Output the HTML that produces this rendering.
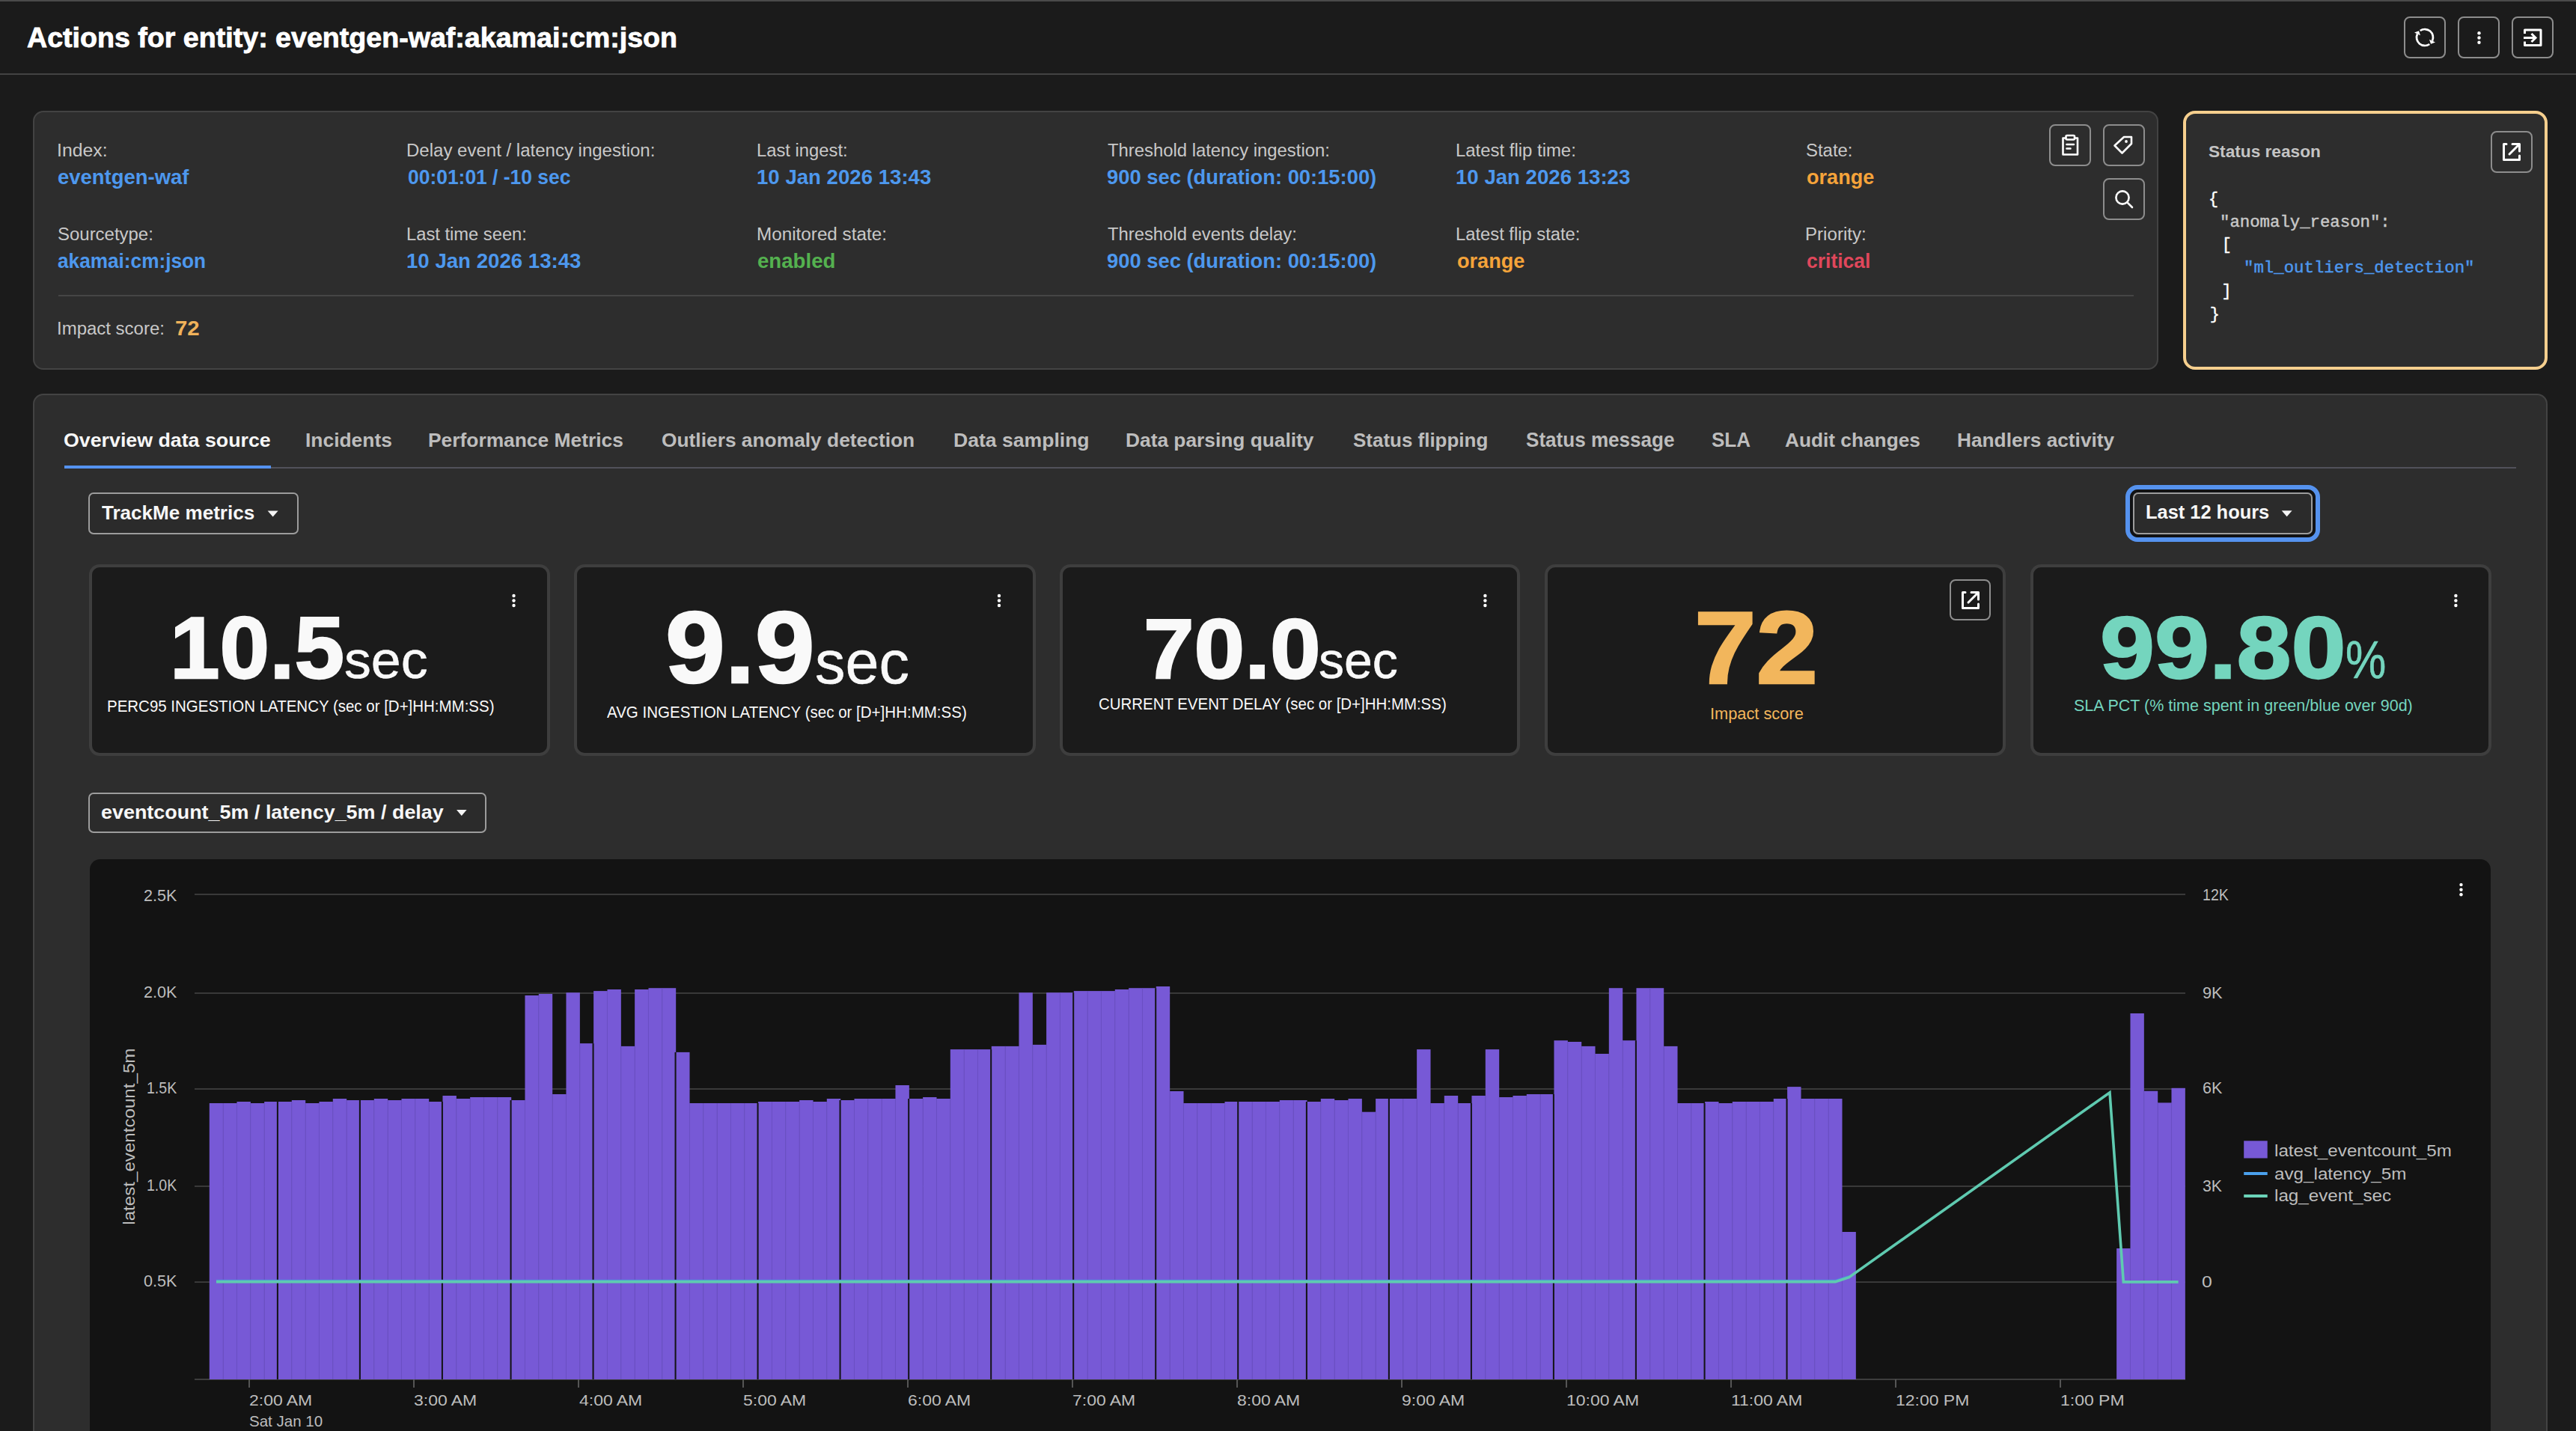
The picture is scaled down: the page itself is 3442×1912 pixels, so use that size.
<!DOCTYPE html><html><head><meta charset="utf-8"><style>
html,body{margin:0;padding:0;width:3442px;height:1912px;overflow:hidden;background:#1b1b1b;}
body{position:relative;font-family:'Liberation Sans', sans-serif;}
.t{position:absolute;white-space:pre;line-height:1;}
.r{position:absolute;box-sizing:border-box;}
svg{position:absolute;left:0;top:0;overflow:visible;}
</style></head><body>
<div class="r" style="left:0px;top:0px;width:3442px;height:2px;background:#4a4a4a"></div>
<div class="r" style="left:0px;top:98px;width:3442px;height:2px;background:#434343"></div>
<div class="t" style="font-size:40px;color:#fff;font-weight:bold;-webkit-text-stroke:0.9px #fff;left:35.50px;top:28.64px;transform-origin:0 33.86px;transform:scale(0.9399,0.9073);">Actions for entity: eventgen-waf:akamai:cm:json</div>
<div class="r" style="left:3212px;top:22px;width:56px;height:56px;border:2px solid #8d8d8d;border-radius:8px;"></div>
<div class="r" style="left:3284px;top:22px;width:56px;height:56px;border:2px solid #8d8d8d;border-radius:8px;"></div>
<div class="r" style="left:3356px;top:22px;width:56px;height:56px;border:2px solid #8d8d8d;border-radius:8px;"></div>
<svg width="3442" height="120">
<path d="M3233.7 41 A11 11 0 0 1 3250 54.6" fill="none" stroke="#fff" stroke-width="2.7"/>
<path d="M3246.3 59 A11 11 0 0 1 3230 45.4" fill="none" stroke="#fff" stroke-width="2.7"/>
<path d="M3248 58.8 L3254 56.4 L3246 52.8 Z" fill="#fff"/>
<path d="M3232 41.2 L3226 43.6 L3234 47.2 Z" fill="#fff"/>
<circle cx="3312.5" cy="44.2" r="2.2" fill="#fff"/><circle cx="3312.5" cy="50.5" r="2.2" fill="#fff"/><circle cx="3312.5" cy="56.8" r="2.2" fill="#fff"/>
<path d="M3373.5 45 V40 H3395 V60.5 H3373.5 V55.5" fill="none" stroke="#fff" stroke-width="3" stroke-linejoin="round"/>
<path d="M3372 50.5 H3388 M3382.5 45 L3388 50.5 L3382.5 56" fill="none" stroke="#fff" stroke-width="3"/>
</svg>
<div class="r" style="left:44px;top:148px;width:2840px;height:346px;background:#2d2d2d;border:2px solid #434343;border-radius:14px;"></div>
<div class="t" style="font-size:23.5px;color:#c8c8c8;left:75.89px;top:189.61px;transform-origin:0 19.89px;transform:scale(1.0550,1.0000);">Index:</div>
<div class="t" style="font-size:27.5px;color:#4d98ee;font-weight:bold;left:77.00px;top:223.22px;transform-origin:0 23.28px;transform:scale(0.9983,1.0000);">eventgen-waf</div>
<div class="t" style="font-size:23.5px;color:#c8c8c8;left:543.46px;top:189.61px;transform-origin:0 19.89px;transform:scale(1.0218,1.0000);">Delay event / latency ingestion:</div>
<div class="t" style="font-size:27.5px;color:#4d98ee;font-weight:bold;left:544.54px;top:223.22px;transform-origin:0 23.28px;transform:scale(0.9609,1.0000);">00:01:01 / -10 sec</div>
<div class="t" style="font-size:23.5px;color:#c8c8c8;left:1010.98px;top:189.61px;transform-origin:0 19.89px;transform:scale(1.0121,1.0000);">Last ingest:</div>
<div class="t" style="font-size:27.5px;color:#4d98ee;font-weight:bold;left:1010.99px;top:223.22px;transform-origin:0 23.28px;transform:scale(1.0039,1.0000);">10 Jan 2026 13:43</div>
<div class="t" style="font-size:23.5px;color:#c8c8c8;left:1480.00px;top:189.61px;transform-origin:0 19.89px;transform:scale(1.0144,1.0000);">Threshold latency ingestion:</div>
<div class="t" style="font-size:27.5px;color:#4d98ee;font-weight:bold;left:1479.01px;top:223.22px;transform-origin:0 23.28px;transform:scale(0.9944,1.0000);">900 sec (duration: 00:15:00)</div>
<div class="t" style="font-size:23.5px;color:#c8c8c8;left:1945.46px;top:189.61px;transform-origin:0 19.89px;transform:scale(1.0175,1.0000);">Latest flip time:</div>
<div class="t" style="font-size:27.5px;color:#4d98ee;font-weight:bold;left:1945.49px;top:223.22px;transform-origin:0 23.28px;transform:scale(1.0039,1.0000);">10 Jan 2026 13:23</div>
<div class="t" style="font-size:23.5px;color:#c8c8c8;left:2413.48px;top:189.61px;transform-origin:0 19.89px;transform:scale(1.0172,1.0000);">State:</div>
<div class="t" style="font-size:27.5px;color:#f5a33a;font-weight:bold;left:2413.52px;top:223.22px;transform-origin:0 23.28px;transform:scale(0.9844,1.0000);">orange</div>
<div class="t" style="font-size:23.5px;color:#c8c8c8;left:76.98px;top:301.61px;transform-origin:0 19.89px;transform:scale(1.0195,1.0000);">Sourcetype:</div>
<div class="t" style="font-size:27.5px;color:#4d98ee;font-weight:bold;left:77.05px;top:334.72px;transform-origin:0 23.28px;transform:scale(0.9527,1.0000);">akamai:cm:json</div>
<div class="t" style="font-size:23.5px;color:#c8c8c8;left:543.48px;top:301.61px;transform-origin:0 19.89px;transform:scale(1.0097,1.0000);">Last time seen:</div>
<div class="t" style="font-size:27.5px;color:#4d98ee;font-weight:bold;left:543.49px;top:334.72px;transform-origin:0 23.28px;transform:scale(1.0043,1.0000);">10 Jan 2026 13:43</div>
<div class="t" style="font-size:23.5px;color:#c8c8c8;left:1010.94px;top:301.61px;transform-origin:0 19.89px;transform:scale(1.0321,1.0000);">Monitored state:</div>
<div class="t" style="font-size:27.5px;color:#54b14f;font-weight:bold;left:1012.00px;top:334.72px;transform-origin:0 23.28px;transform:scale(1.0050,1.0000);">enabled</div>
<div class="t" style="font-size:23.5px;color:#c8c8c8;left:1480.00px;top:301.61px;transform-origin:0 19.89px;transform:scale(1.0133,1.0000);">Threshold events delay:</div>
<div class="t" style="font-size:27.5px;color:#4d98ee;font-weight:bold;left:1479.01px;top:334.72px;transform-origin:0 23.28px;transform:scale(0.9944,1.0000);">900 sec (duration: 00:15:00)</div>
<div class="t" style="font-size:23.5px;color:#c8c8c8;left:1945.48px;top:301.61px;transform-origin:0 19.89px;transform:scale(1.0112,1.0000);">Latest flip state:</div>
<div class="t" style="font-size:27.5px;color:#f5a33a;font-weight:bold;left:1946.52px;top:334.72px;transform-origin:0 23.28px;transform:scale(0.9844,1.0000);">orange</div>
<div class="t" style="font-size:23.5px;color:#c8c8c8;left:2412.45px;top:301.61px;transform-origin:0 19.89px;transform:scale(1.0263,1.0000);">Priority:</div>
<div class="t" style="font-size:27.5px;color:#e0475b;font-weight:bold;left:2413.54px;top:334.72px;transform-origin:0 23.28px;transform:scale(0.9640,1.0000);">critical</div>
<div class="r" style="left:78px;top:394px;width:2773px;height:2px;background:#454545"></div>
<div class="t" style="font-size:23.5px;color:#c8c8c8;left:75.96px;top:428.11px;transform-origin:0 19.89px;transform:scale(1.0204,1.0000);">Impact score:</div>
<div class="t" style="font-size:27.5px;color:#f0b25a;font-weight:bold;left:233.83px;top:424.72px;transform-origin:0 23.28px;transform:scale(1.0690,1.0000);">72</div>
<div class="r" style="left:2738px;top:166px;width:56px;height:56px;border:2px solid #8d8d8d;border-radius:8px;"></div>
<div class="r" style="left:2810px;top:166px;width:56px;height:56px;border:2px solid #8d8d8d;border-radius:8px;"></div>
<div class="r" style="left:2810px;top:238px;width:56px;height:56px;border:2px solid #8d8d8d;border-radius:8px;"></div>
<svg width="3442" height="320">
<g fill="none" stroke="#fff" stroke-width="2.6" stroke-linejoin="round">
<path d="M2760 184.5 H2756.5 V206.5 H2776 V184.5 H2772.5"/>
<rect x="2760.5" y="181" width="11.5" height="5.5" rx="1.5"/>
<path d="M2761.5 193 H2771 M2761.5 198.5 H2766.5" stroke-linecap="round"/>
<path d="M2825.5 194.5 L2835.5 204.5 L2848 192 V183 H2838 Z"/>
<circle cx="2836" cy="264" r="8.6"/>
<path d="M2842.3 270.3 L2849 277" stroke-linecap="round"/>
</g>
<circle cx="2841" cy="189" r="1.9" fill="#fff"/>
</svg>
<div class="r" style="left:2917px;top:148px;width:487px;height:346px;background:#2d2d2d;border:4px solid #f6cf8e;border-radius:16px;"></div>
<div class="t" style="font-size:22.5px;color:#c4c4c4;font-weight:bold;left:2950.99px;top:191.95px;transform-origin:0 19.05px;transform:scale(1.0068,1.0000);">Status reason</div>
<div class="r" style="left:3328px;top:175px;width:56px;height:56px;border:2px solid #8d8d8d;border-radius:8px;"></div>
<svg width="3442" height="320">
<g fill="none" stroke="#fff" stroke-width="3" stroke-linecap="round" stroke-linejoin="round">
<path d="M3349 192.5 H3345.5 V213.5 H3366.5 V208"/>
<path d="M3353 206 L3366 193 M3357 192.5 H3366.5 V202"/>
</g></svg>
<div class="t" style="font-size:21.8px;color:#fff;font-family:'Liberation Mono', monospace;-webkit-text-stroke:0.45px #fff;left:2951.00px;top:255.85px;">{</div>
<div class="t" style="font-size:21.8px;color:#c8c8c8;font-family:'Liberation Mono', monospace;-webkit-text-stroke:0.45px #c8c8c8;left:2966.13px;top:286.61px;transform-origin:0 18.45px;transform:scale(1.0242,1.0000);">"anomaly_reason":</div>
<div class="t" style="font-size:21.8px;color:#fff;font-family:'Liberation Mono', monospace;-webkit-text-stroke:0.45px #fff;left:2968.70px;top:317.37px;">[</div>
<div class="t" style="font-size:21.8px;color:#4d98ee;font-family:'Liberation Mono', monospace;-webkit-text-stroke:0.45px #4d98ee;left:2998.22px;top:348.13px;transform-origin:0 18.45px;transform:scale(1.0254,1.0000);">"ml_outliers_detection"</div>
<div class="t" style="font-size:21.8px;color:#fff;font-family:'Liberation Mono', monospace;-webkit-text-stroke:0.45px #fff;left:2968.60px;top:378.89px;">]</div>
<div class="t" style="font-size:21.8px;color:#fff;font-family:'Liberation Mono', monospace;-webkit-text-stroke:0.45px #fff;left:2952.80px;top:409.65px;">}</div>
<div class="r" style="left:44px;top:526px;width:3360px;height:1420px;background:#2d2d2d;border:2px solid #434343;border-radius:14px;"></div>
<div class="r" style="left:86px;top:624px;width:3276px;height:2px;background:#51515a"></div>
<div class="r" style="left:86px;top:622px;width:276px;height:4px;background:#5592f0"></div>
<div class="t" style="font-size:28px;color:#f7f7f7;font-weight:bold;left:85.24px;top:574.00px;transform-origin:0 23.70px;transform:scale(0.9559,0.9371);">Overview data source</div>
<div class="t" style="font-size:28px;color:#bdbdbd;font-weight:bold;left:408.01px;top:574.00px;transform-origin:0 23.70px;transform:scale(0.9425,0.9371);">Incidents</div>
<div class="t" style="font-size:28px;color:#bdbdbd;font-weight:bold;left:572.12px;top:574.00px;transform-origin:0 23.70px;transform:scale(0.9416,0.9371);">Performance Metrics</div>
<div class="t" style="font-size:28px;color:#bdbdbd;font-weight:bold;left:884.46px;top:574.00px;transform-origin:0 23.70px;transform:scale(0.9409,0.9371);">Outliers anomaly detection</div>
<div class="t" style="font-size:28px;color:#bdbdbd;font-weight:bold;left:1273.70px;top:574.00px;transform-origin:0 23.70px;transform:scale(0.9489,0.9371);">Data sampling</div>
<div class="t" style="font-size:28px;color:#bdbdbd;font-weight:bold;left:1504.12px;top:574.00px;transform-origin:0 23.70px;transform:scale(0.9398,0.9371);">Data parsing quality</div>
<div class="t" style="font-size:28px;color:#bdbdbd;font-weight:bold;left:1808.07px;top:574.00px;transform-origin:0 23.70px;transform:scale(0.9271,0.9371);">Status flipping</div>
<div class="t" style="font-size:28px;color:#bdbdbd;font-weight:bold;left:2038.77px;top:574.00px;transform-origin:0 23.70px;transform:scale(0.9307,0.9847);">Status message</div>
<div class="t" style="font-size:28px;color:#bdbdbd;font-weight:bold;left:2286.87px;top:574.00px;transform-origin:0 23.70px;transform:scale(0.9296,0.9847);">SLA</div>
<div class="t" style="font-size:28px;color:#bdbdbd;font-weight:bold;left:2385.46px;top:574.00px;transform-origin:0 23.70px;transform:scale(0.9377,0.9371);">Audit changes</div>
<div class="t" style="font-size:28px;color:#bdbdbd;font-weight:bold;left:2614.52px;top:574.00px;transform-origin:0 23.70px;transform:scale(0.9378,0.9371);">Handlers activity</div>
<div class="r" style="left:118px;top:658px;width:281px;height:56px;border:2px solid #9c9c9c;border-radius:7px;background:#2b2b2b;"></div>
<div class="t" style="font-size:28px;color:#f7f7f7;font-weight:bold;left:136.00px;top:670.60px;transform-origin:0 23.70px;transform:scale(0.9306,0.9274);">TrackMe metrics</div>
<svg width="3442" height="1912"><path d="M357.6 682.4 H371.6 L364.6 690.4 Z" fill="#f5f5f5"/></svg>
<div class="r" style="left:2840px;top:648px;width:260px;height:76px;border:6px solid #5592ee;border-radius:16px;"></div>
<div class="r" style="left:2846px;top:654px;width:248px;height:64px;border:4px solid #111214;border-radius:11px;"></div>
<div class="r" style="left:2850px;top:658px;width:240px;height:56px;border:2px solid #9c9c9c;border-radius:7px;background:#2b2b2b;"></div>
<div class="t" style="font-size:28px;color:#f7f7f7;font-weight:bold;left:2866.79px;top:670.40px;transform-origin:0 23.70px;transform:scale(0.9073,0.9274);">Last 12 hours</div>
<svg width="3442" height="1912"><path d="M3048.7 682.2 H3062.6 L3055.6499999999996 690.2 Z" fill="#f5f5f5"/></svg>
<div class="r" style="left:118px;top:1058.6px;width:532.4px;height:54.80000000000018px;border:2px solid #9c9c9c;border-radius:7px;background:#2b2b2b;"></div>
<div class="t" style="font-size:28px;color:#f7f7f7;font-weight:bold;left:135.14px;top:1070.60px;transform-origin:0 23.70px;transform:scale(0.9613,0.9274);">eventcount_5m / latency_5m / delay</div>
<svg width="3442" height="1912"><path d="M610 1082 H623.6 L616.8 1090 Z" fill="#f5f5f5"/></svg>
<div class="r" style="left:118.5px;top:754px;width:616.3px;height:255.5px;background:#1b1b1b;border:4px solid #3e3e3e;border-radius:14px;"></div>
<div class="r" style="left:767px;top:754px;width:616.5999999999999px;height:255.5px;background:#1b1b1b;border:4px solid #3e3e3e;border-radius:14px;"></div>
<div class="r" style="left:1416.2px;top:754px;width:614.8px;height:255.5px;background:#1b1b1b;border:4px solid #3e3e3e;border-radius:14px;"></div>
<div class="r" style="left:2063.7px;top:754px;width:616.7000000000003px;height:255.5px;background:#1b1b1b;border:4px solid #3e3e3e;border-radius:14px;"></div>
<div class="r" style="left:2713px;top:754px;width:616.3000000000002px;height:255.5px;background:#1b1b1b;border:4px solid #3e3e3e;border-radius:14px;"></div>
<svg width="3442" height="1912"><circle cx="686.5" cy="796.05" r="2.2" fill="#fff"/><circle cx="686.5" cy="802.5" r="2.2" fill="#fff"/><circle cx="686.5" cy="808.95" r="2.2" fill="#fff"/></svg>
<svg width="3442" height="1912"><circle cx="1335" cy="796.05" r="2.2" fill="#fff"/><circle cx="1335" cy="802.5" r="2.2" fill="#fff"/><circle cx="1335" cy="808.95" r="2.2" fill="#fff"/></svg>
<svg width="3442" height="1912"><circle cx="1984.4" cy="796.05" r="2.2" fill="#fff"/><circle cx="1984.4" cy="802.5" r="2.2" fill="#fff"/><circle cx="1984.4" cy="808.95" r="2.2" fill="#fff"/></svg>
<svg width="3442" height="1912"><circle cx="3281.4" cy="796.05" r="2.2" fill="#fff"/><circle cx="3281.4" cy="802.5" r="2.2" fill="#fff"/><circle cx="3281.4" cy="808.95" r="2.2" fill="#fff"/></svg>
<div class="t" style="font-size:122px;color:#f9f9f9;font-weight:bold;-webkit-text-stroke:2.4px #f9f9f9;left:227.11px;top:803.23px;transform-origin:0 103.27px;transform:scale(0.9817,0.9614);">10.5</div>
<div class="t" style="font-size:72.6px;color:#f9f9f9;-webkit-text-stroke:0.6px #f9f9f9;left:460.43px;top:845.04px;transform-origin:0 61.46px;transform:scale(0.9873,0.9580);">sec</div>
<div class="t" style="font-size:21.8px;color:#f9f9f9;left:143.32px;top:932.75px;transform-origin:0 18.45px;transform:scale(0.9394,1.0000);">PERC95 INGESTION LATENCY (sec or [D+]HH:MM:SS)</div>
<div class="t" style="font-size:135px;color:#f9f9f9;font-weight:bold;-webkit-text-stroke:2.4px #f9f9f9;left:888.51px;top:798.42px;transform-origin:0 114.28px;transform:scale(1.0635,0.9982);">9.9</div>
<div class="t" style="font-size:85px;color:#f9f9f9;-webkit-text-stroke:0.6px #f9f9f9;left:1088.50px;top:840.75px;transform-origin:0 71.95px;transform:scale(0.9516,0.9553);">sec</div>
<div class="t" style="font-size:21.8px;color:#f9f9f9;left:811.00px;top:940.95px;transform-origin:0 18.45px;transform:scale(0.9418,1.0000);">AVG INGESTION LATENCY (sec or [D+]HH:MM:SS)</div>
<div class="t" style="font-size:117px;color:#f9f9f9;font-weight:bold;-webkit-text-stroke:2.4px #f9f9f9;left:1527.54px;top:807.46px;transform-origin:0 99.04px;transform:scale(1.0391,0.9718);">70.0</div>
<div class="t" style="font-size:72.6px;color:#f9f9f9;-webkit-text-stroke:0.6px #f9f9f9;left:1762.13px;top:845.04px;transform-origin:0 61.46px;transform:scale(0.9373,0.9555);">sec</div>
<div class="t" style="font-size:21.8px;color:#f9f9f9;left:1467.96px;top:930.35px;transform-origin:0 18.45px;transform:scale(0.9377,1.0000);">CURRENT EVENT DELAY (sec or [D+]HH:MM:SS)</div>
<div class="t" style="font-size:143px;color:#f2b65c;font-weight:bold;-webkit-text-stroke:2.8px #f2b65c;left:2263.51px;top:792.45px;transform-origin:0 121.05px;transform:scale(1.0387,0.9652);">72</div>
<div class="t" style="font-size:22.6px;color:#f2b65c;left:2285.37px;top:943.27px;transform-origin:0 19.13px;transform:scale(0.9646,1.0000);">Impact score</div>
<div class="r" style="left:2605.3px;top:774.3px;width:55.2px;height:55.2px;border:2px solid #8d8d8d;border-radius:8px;"></div>
<svg width="3442" height="1912"><g fill="none" stroke="#fff" stroke-width="3" stroke-linecap="round" stroke-linejoin="round">
<path d="M2626 791.5 H2622.5 V812.5 H2643.5 V807"/>
<path d="M2630 805 L2643 792 M2634 791.5 H2643.5 V801"/>
</g></svg>
<div class="t" style="font-size:122px;color:#74d5be;font-weight:bold;-webkit-text-stroke:2.4px #74d5be;left:2806.07px;top:803.23px;transform-origin:0 103.27px;transform:scale(1.0759,0.9625);">99.80</div>
<div class="t" style="font-size:70px;color:#74d5be;-webkit-text-stroke:0.6px #74d5be;left:3133.86px;top:847.25px;transform-origin:0 59.26px;transform:scale(0.8724,0.9989);">%</div>
<div class="t" style="font-size:21.8px;color:#74d5be;left:2771.01px;top:932.25px;transform-origin:0 18.45px;transform:scale(0.9869,1.0000);">SLA PCT (% time spent in green/blue over 90d)</div>
<div class="r" style="left:120px;top:1147.8px;width:3208px;height:800px;background:#131313;border-radius:14px;"></div>
<svg width="3442" height="1912"><rect x="260" y="1194" width="2660" height="2" fill="#393939"/><rect x="260" y="1326" width="2660" height="2" fill="#393939"/><rect x="260" y="1454" width="2660" height="2" fill="#393939"/><rect x="260" y="1584" width="2660" height="2" fill="#393939"/><rect x="260" y="1712" width="2660" height="2" fill="#393939"/><rect x="260" y="1842" width="2660" height="2" fill="#3d3d3d"/><rect x="332" y="1843" width="2" height="11" fill="#555"/><rect x="552" y="1843" width="2" height="11" fill="#555"/><rect x="772" y="1843" width="2" height="11" fill="#555"/><rect x="992" y="1843" width="2" height="11" fill="#555"/><rect x="1212" y="1843" width="2" height="11" fill="#555"/><rect x="1432" y="1843" width="2" height="11" fill="#555"/><rect x="1652" y="1843" width="2" height="11" fill="#555"/><rect x="1872" y="1843" width="2" height="11" fill="#555"/><rect x="2092" y="1843" width="2" height="11" fill="#555"/><rect x="2312" y="1843" width="2" height="11" fill="#555"/><rect x="2532" y="1843" width="2" height="11" fill="#555"/><rect x="2752" y="1843" width="2" height="11" fill="#555"/><rect x="279.80" y="1474.00" width="18.38" height="369.00" fill="#7759d6"/><rect x="298.13" y="1474.00" width="18.38" height="369.00" fill="#7759d6"/><rect x="316.47" y="1472.00" width="18.38" height="371.00" fill="#7759d6"/><rect x="334.80" y="1474.00" width="18.38" height="369.00" fill="#7759d6"/><rect x="353.13" y="1472.00" width="18.38" height="371.00" fill="#7759d6"/><rect x="371.47" y="1472.00" width="18.38" height="371.00" fill="#7759d6"/><rect x="389.80" y="1470.00" width="18.38" height="373.00" fill="#7759d6"/><rect x="408.13" y="1474.00" width="18.38" height="369.00" fill="#7759d6"/><rect x="426.47" y="1472.00" width="18.38" height="371.00" fill="#7759d6"/><rect x="444.80" y="1468.00" width="18.38" height="375.00" fill="#7759d6"/><rect x="463.13" y="1470.00" width="18.38" height="373.00" fill="#7759d6"/><rect x="481.47" y="1470.00" width="18.38" height="373.00" fill="#7759d6"/><rect x="499.80" y="1468.00" width="18.38" height="375.00" fill="#7759d6"/><rect x="518.13" y="1470.00" width="18.38" height="373.00" fill="#7759d6"/><rect x="536.47" y="1468.00" width="18.38" height="375.00" fill="#7759d6"/><rect x="554.80" y="1468.00" width="18.38" height="375.00" fill="#7759d6"/><rect x="573.13" y="1472.00" width="18.38" height="371.00" fill="#7759d6"/><rect x="591.47" y="1464.00" width="18.38" height="379.00" fill="#7759d6"/><rect x="609.80" y="1468.00" width="18.38" height="375.00" fill="#7759d6"/><rect x="628.13" y="1466.00" width="18.38" height="377.00" fill="#7759d6"/><rect x="646.47" y="1466.00" width="18.38" height="377.00" fill="#7759d6"/><rect x="664.80" y="1466.00" width="18.38" height="377.00" fill="#7759d6"/><rect x="683.13" y="1470.00" width="18.38" height="373.00" fill="#7759d6"/><rect x="701.47" y="1330.00" width="18.38" height="513.00" fill="#7759d6"/><rect x="719.80" y="1328.00" width="18.38" height="515.00" fill="#7759d6"/><rect x="738.13" y="1462.00" width="18.38" height="381.00" fill="#7759d6"/><rect x="756.47" y="1326.25" width="18.38" height="516.75" fill="#7759d6"/><rect x="774.80" y="1394.10" width="18.38" height="448.90" fill="#7759d6"/><rect x="793.13" y="1324.10" width="18.38" height="518.90" fill="#7759d6"/><rect x="811.47" y="1322.00" width="18.38" height="521.00" fill="#7759d6"/><rect x="829.80" y="1397.90" width="18.38" height="445.10" fill="#7759d6"/><rect x="848.13" y="1322.00" width="18.38" height="521.00" fill="#7759d6"/><rect x="866.47" y="1320.20" width="18.38" height="522.80" fill="#7759d6"/><rect x="884.80" y="1320.20" width="18.38" height="522.80" fill="#7759d6"/><rect x="903.13" y="1405.90" width="18.38" height="437.10" fill="#7759d6"/><rect x="921.47" y="1474.00" width="18.38" height="369.00" fill="#7759d6"/><rect x="939.80" y="1474.00" width="18.38" height="369.00" fill="#7759d6"/><rect x="958.13" y="1474.00" width="18.38" height="369.00" fill="#7759d6"/><rect x="976.47" y="1474.00" width="18.38" height="369.00" fill="#7759d6"/><rect x="994.80" y="1474.00" width="18.38" height="369.00" fill="#7759d6"/><rect x="1013.13" y="1472.00" width="18.38" height="371.00" fill="#7759d6"/><rect x="1031.47" y="1472.00" width="18.38" height="371.00" fill="#7759d6"/><rect x="1049.80" y="1472.00" width="18.38" height="371.00" fill="#7759d6"/><rect x="1068.13" y="1470.00" width="18.38" height="373.00" fill="#7759d6"/><rect x="1086.47" y="1472.00" width="18.38" height="371.00" fill="#7759d6"/><rect x="1104.80" y="1468.00" width="18.38" height="375.00" fill="#7759d6"/><rect x="1123.13" y="1470.00" width="18.38" height="373.00" fill="#7759d6"/><rect x="1141.47" y="1468.00" width="18.38" height="375.00" fill="#7759d6"/><rect x="1159.80" y="1468.00" width="18.38" height="375.00" fill="#7759d6"/><rect x="1178.13" y="1468.00" width="18.38" height="375.00" fill="#7759d6"/><rect x="1196.47" y="1450.00" width="18.38" height="393.00" fill="#7759d6"/><rect x="1214.80" y="1468.00" width="18.38" height="375.00" fill="#7759d6"/><rect x="1233.13" y="1466.00" width="18.38" height="377.00" fill="#7759d6"/><rect x="1251.47" y="1468.00" width="18.38" height="375.00" fill="#7759d6"/><rect x="1269.80" y="1402.10" width="18.38" height="440.90" fill="#7759d6"/><rect x="1288.13" y="1402.10" width="18.38" height="440.90" fill="#7759d6"/><rect x="1306.47" y="1402.10" width="18.38" height="440.90" fill="#7759d6"/><rect x="1324.80" y="1397.90" width="18.38" height="445.10" fill="#7759d6"/><rect x="1343.13" y="1397.90" width="18.38" height="445.10" fill="#7759d6"/><rect x="1361.47" y="1326.25" width="18.38" height="516.75" fill="#7759d6"/><rect x="1379.80" y="1395.90" width="18.38" height="447.10" fill="#7759d6"/><rect x="1398.13" y="1326.25" width="18.38" height="516.75" fill="#7759d6"/><rect x="1416.47" y="1326.25" width="18.38" height="516.75" fill="#7759d6"/><rect x="1434.80" y="1324.10" width="18.38" height="518.90" fill="#7759d6"/><rect x="1453.13" y="1324.10" width="18.38" height="518.90" fill="#7759d6"/><rect x="1471.47" y="1324.10" width="18.38" height="518.90" fill="#7759d6"/><rect x="1489.80" y="1322.00" width="18.38" height="521.00" fill="#7759d6"/><rect x="1508.13" y="1320.20" width="18.38" height="522.80" fill="#7759d6"/><rect x="1526.47" y="1320.20" width="18.38" height="522.80" fill="#7759d6"/><rect x="1544.80" y="1318.00" width="18.38" height="525.00" fill="#7759d6"/><rect x="1563.13" y="1458.00" width="18.38" height="385.00" fill="#7759d6"/><rect x="1581.47" y="1474.00" width="18.38" height="369.00" fill="#7759d6"/><rect x="1599.80" y="1474.00" width="18.38" height="369.00" fill="#7759d6"/><rect x="1618.13" y="1474.00" width="18.38" height="369.00" fill="#7759d6"/><rect x="1636.47" y="1472.00" width="18.38" height="371.00" fill="#7759d6"/><rect x="1654.80" y="1472.00" width="18.38" height="371.00" fill="#7759d6"/><rect x="1673.13" y="1472.00" width="18.38" height="371.00" fill="#7759d6"/><rect x="1691.47" y="1472.00" width="18.38" height="371.00" fill="#7759d6"/><rect x="1709.80" y="1470.00" width="18.38" height="373.00" fill="#7759d6"/><rect x="1728.13" y="1470.00" width="18.38" height="373.00" fill="#7759d6"/><rect x="1746.47" y="1472.00" width="18.38" height="371.00" fill="#7759d6"/><rect x="1764.80" y="1468.00" width="18.38" height="375.00" fill="#7759d6"/><rect x="1783.13" y="1470.00" width="18.38" height="373.00" fill="#7759d6"/><rect x="1801.47" y="1468.00" width="18.38" height="375.00" fill="#7759d6"/><rect x="1819.80" y="1485.70" width="18.38" height="357.30" fill="#7759d6"/><rect x="1838.13" y="1468.00" width="18.38" height="375.00" fill="#7759d6"/><rect x="1856.47" y="1468.00" width="18.38" height="375.00" fill="#7759d6"/><rect x="1874.80" y="1468.00" width="18.38" height="375.00" fill="#7759d6"/><rect x="1893.13" y="1402.10" width="18.38" height="440.90" fill="#7759d6"/><rect x="1911.47" y="1474.00" width="18.38" height="369.00" fill="#7759d6"/><rect x="1929.80" y="1464.00" width="18.38" height="379.00" fill="#7759d6"/><rect x="1948.13" y="1474.00" width="18.38" height="369.00" fill="#7759d6"/><rect x="1966.47" y="1464.00" width="18.38" height="379.00" fill="#7759d6"/><rect x="1984.80" y="1402.10" width="18.38" height="440.90" fill="#7759d6"/><rect x="2003.13" y="1466.00" width="18.38" height="377.00" fill="#7759d6"/><rect x="2021.47" y="1464.00" width="18.38" height="379.00" fill="#7759d6"/><rect x="2039.80" y="1462.00" width="18.38" height="381.00" fill="#7759d6"/><rect x="2058.13" y="1462.00" width="18.38" height="381.00" fill="#7759d6"/><rect x="2076.47" y="1390.20" width="18.38" height="452.80" fill="#7759d6"/><rect x="2094.80" y="1392.00" width="18.38" height="451.00" fill="#7759d6"/><rect x="2113.13" y="1397.90" width="18.38" height="445.10" fill="#7759d6"/><rect x="2131.47" y="1408.00" width="18.38" height="435.00" fill="#7759d6"/><rect x="2149.80" y="1320.20" width="18.38" height="522.80" fill="#7759d6"/><rect x="2168.13" y="1390.20" width="18.38" height="452.80" fill="#7759d6"/><rect x="2186.47" y="1320.20" width="18.38" height="522.80" fill="#7759d6"/><rect x="2204.80" y="1320.20" width="18.38" height="522.80" fill="#7759d6"/><rect x="2223.13" y="1397.90" width="18.38" height="445.10" fill="#7759d6"/><rect x="2241.47" y="1474.00" width="18.38" height="369.00" fill="#7759d6"/><rect x="2259.80" y="1474.00" width="18.38" height="369.00" fill="#7759d6"/><rect x="2278.13" y="1472.00" width="18.38" height="371.00" fill="#7759d6"/><rect x="2296.47" y="1474.00" width="18.38" height="369.00" fill="#7759d6"/><rect x="2314.80" y="1472.00" width="18.38" height="371.00" fill="#7759d6"/><rect x="2333.13" y="1472.00" width="18.38" height="371.00" fill="#7759d6"/><rect x="2351.47" y="1472.00" width="18.38" height="371.00" fill="#7759d6"/><rect x="2369.80" y="1468.00" width="18.38" height="375.00" fill="#7759d6"/><rect x="2388.13" y="1452.10" width="18.38" height="390.90" fill="#7759d6"/><rect x="2406.47" y="1468.00" width="18.38" height="375.00" fill="#7759d6"/><rect x="2424.80" y="1468.00" width="18.38" height="375.00" fill="#7759d6"/><rect x="2443.13" y="1468.00" width="18.38" height="375.00" fill="#7759d6"/><rect x="2461.47" y="1646.00" width="18.38" height="197.00" fill="#7759d6"/><rect x="2828.13" y="1668.00" width="18.38" height="175.00" fill="#7759d6"/><rect x="2846.47" y="1354.00" width="18.38" height="489.00" fill="#7759d6"/><rect x="2864.80" y="1457.70" width="18.38" height="385.30" fill="#7759d6"/><rect x="2883.13" y="1473.40" width="18.38" height="369.60" fill="#7759d6"/><rect x="2901.47" y="1453.80" width="18.38" height="389.20" fill="#7759d6"/><rect x="297.63" y="1474.00" width="1" height="369.00" fill="#6b50c4"/><rect x="315.97" y="1474.00" width="1" height="369.00" fill="#6b50c4"/><rect x="334.30" y="1474.00" width="1" height="369.00" fill="#6b50c4"/><rect x="352.63" y="1474.00" width="1" height="369.00" fill="#6b50c4"/><rect x="369.87" y="1472.00" width="2" height="371.00" fill="#141416"/><rect x="389.30" y="1472.00" width="1" height="371.00" fill="#6b50c4"/><rect x="407.63" y="1474.00" width="1" height="369.00" fill="#6b50c4"/><rect x="425.97" y="1474.00" width="1" height="369.00" fill="#6b50c4"/><rect x="444.30" y="1472.00" width="1" height="371.00" fill="#6b50c4"/><rect x="462.63" y="1470.00" width="1" height="373.00" fill="#6b50c4"/><rect x="479.87" y="1470.00" width="2" height="373.00" fill="#141416"/><rect x="499.30" y="1470.00" width="1" height="373.00" fill="#6b50c4"/><rect x="517.63" y="1470.00" width="1" height="373.00" fill="#6b50c4"/><rect x="535.97" y="1470.00" width="1" height="373.00" fill="#6b50c4"/><rect x="554.30" y="1468.00" width="1" height="375.00" fill="#6b50c4"/><rect x="572.63" y="1472.00" width="1" height="371.00" fill="#6b50c4"/><rect x="589.87" y="1472.00" width="2" height="371.00" fill="#141416"/><rect x="609.30" y="1468.00" width="1" height="375.00" fill="#6b50c4"/><rect x="627.63" y="1468.00" width="1" height="375.00" fill="#6b50c4"/><rect x="645.97" y="1466.00" width="1" height="377.00" fill="#6b50c4"/><rect x="664.30" y="1466.00" width="1" height="377.00" fill="#6b50c4"/><rect x="681.53" y="1470.00" width="2" height="373.00" fill="#141416"/><rect x="700.97" y="1470.00" width="1" height="373.00" fill="#6b50c4"/><rect x="719.30" y="1330.00" width="1" height="513.00" fill="#6b50c4"/><rect x="737.63" y="1462.00" width="1" height="381.00" fill="#6b50c4"/><rect x="755.97" y="1462.00" width="1" height="381.00" fill="#6b50c4"/><rect x="774.30" y="1394.10" width="1" height="448.90" fill="#6b50c4"/><rect x="791.53" y="1394.10" width="2" height="448.90" fill="#141416"/><rect x="810.97" y="1324.10" width="1" height="518.90" fill="#6b50c4"/><rect x="829.30" y="1397.90" width="1" height="445.10" fill="#6b50c4"/><rect x="847.63" y="1397.90" width="1" height="445.10" fill="#6b50c4"/><rect x="865.97" y="1322.00" width="1" height="521.00" fill="#6b50c4"/><rect x="884.30" y="1320.20" width="1" height="522.80" fill="#6b50c4"/><rect x="901.53" y="1405.90" width="2" height="437.10" fill="#141416"/><rect x="920.97" y="1474.00" width="1" height="369.00" fill="#6b50c4"/><rect x="939.30" y="1474.00" width="1" height="369.00" fill="#6b50c4"/><rect x="957.63" y="1474.00" width="1" height="369.00" fill="#6b50c4"/><rect x="975.97" y="1474.00" width="1" height="369.00" fill="#6b50c4"/><rect x="994.30" y="1474.00" width="1" height="369.00" fill="#6b50c4"/><rect x="1011.53" y="1474.00" width="2" height="369.00" fill="#141416"/><rect x="1030.97" y="1472.00" width="1" height="371.00" fill="#6b50c4"/><rect x="1049.30" y="1472.00" width="1" height="371.00" fill="#6b50c4"/><rect x="1067.63" y="1472.00" width="1" height="371.00" fill="#6b50c4"/><rect x="1085.97" y="1472.00" width="1" height="371.00" fill="#6b50c4"/><rect x="1104.30" y="1472.00" width="1" height="371.00" fill="#6b50c4"/><rect x="1121.53" y="1470.00" width="2" height="373.00" fill="#141416"/><rect x="1140.97" y="1470.00" width="1" height="373.00" fill="#6b50c4"/><rect x="1159.30" y="1468.00" width="1" height="375.00" fill="#6b50c4"/><rect x="1177.63" y="1468.00" width="1" height="375.00" fill="#6b50c4"/><rect x="1195.97" y="1468.00" width="1" height="375.00" fill="#6b50c4"/><rect x="1213.20" y="1468.00" width="2" height="375.00" fill="#141416"/><rect x="1232.63" y="1468.00" width="1" height="375.00" fill="#6b50c4"/><rect x="1250.97" y="1468.00" width="1" height="375.00" fill="#6b50c4"/><rect x="1269.30" y="1468.00" width="1" height="375.00" fill="#6b50c4"/><rect x="1287.63" y="1402.10" width="1" height="440.90" fill="#6b50c4"/><rect x="1305.97" y="1402.10" width="1" height="440.90" fill="#6b50c4"/><rect x="1323.20" y="1402.10" width="2" height="440.90" fill="#141416"/><rect x="1342.63" y="1397.90" width="1" height="445.10" fill="#6b50c4"/><rect x="1360.97" y="1397.90" width="1" height="445.10" fill="#6b50c4"/><rect x="1379.30" y="1395.90" width="1" height="447.10" fill="#6b50c4"/><rect x="1397.63" y="1395.90" width="1" height="447.10" fill="#6b50c4"/><rect x="1415.97" y="1326.25" width="1" height="516.75" fill="#6b50c4"/><rect x="1433.20" y="1326.25" width="2" height="516.75" fill="#141416"/><rect x="1452.63" y="1324.10" width="1" height="518.90" fill="#6b50c4"/><rect x="1470.97" y="1324.10" width="1" height="518.90" fill="#6b50c4"/><rect x="1489.30" y="1324.10" width="1" height="518.90" fill="#6b50c4"/><rect x="1507.63" y="1322.00" width="1" height="521.00" fill="#6b50c4"/><rect x="1525.97" y="1320.20" width="1" height="522.80" fill="#6b50c4"/><rect x="1543.20" y="1320.20" width="2" height="522.80" fill="#141416"/><rect x="1562.63" y="1458.00" width="1" height="385.00" fill="#6b50c4"/><rect x="1580.97" y="1474.00" width="1" height="369.00" fill="#6b50c4"/><rect x="1599.30" y="1474.00" width="1" height="369.00" fill="#6b50c4"/><rect x="1617.63" y="1474.00" width="1" height="369.00" fill="#6b50c4"/><rect x="1635.97" y="1474.00" width="1" height="369.00" fill="#6b50c4"/><rect x="1653.20" y="1472.00" width="2" height="371.00" fill="#141416"/><rect x="1672.63" y="1472.00" width="1" height="371.00" fill="#6b50c4"/><rect x="1690.97" y="1472.00" width="1" height="371.00" fill="#6b50c4"/><rect x="1709.30" y="1472.00" width="1" height="371.00" fill="#6b50c4"/><rect x="1727.63" y="1470.00" width="1" height="373.00" fill="#6b50c4"/><rect x="1744.87" y="1472.00" width="2" height="371.00" fill="#141416"/><rect x="1764.30" y="1472.00" width="1" height="371.00" fill="#6b50c4"/><rect x="1782.63" y="1470.00" width="1" height="373.00" fill="#6b50c4"/><rect x="1800.97" y="1470.00" width="1" height="373.00" fill="#6b50c4"/><rect x="1819.30" y="1485.70" width="1" height="357.30" fill="#6b50c4"/><rect x="1837.63" y="1485.70" width="1" height="357.30" fill="#6b50c4"/><rect x="1854.87" y="1468.00" width="2" height="375.00" fill="#141416"/><rect x="1874.30" y="1468.00" width="1" height="375.00" fill="#6b50c4"/><rect x="1892.63" y="1468.00" width="1" height="375.00" fill="#6b50c4"/><rect x="1910.97" y="1474.00" width="1" height="369.00" fill="#6b50c4"/><rect x="1929.30" y="1474.00" width="1" height="369.00" fill="#6b50c4"/><rect x="1947.63" y="1474.00" width="1" height="369.00" fill="#6b50c4"/><rect x="1964.87" y="1474.00" width="2" height="369.00" fill="#141416"/><rect x="1984.30" y="1464.00" width="1" height="379.00" fill="#6b50c4"/><rect x="2002.63" y="1466.00" width="1" height="377.00" fill="#6b50c4"/><rect x="2020.97" y="1466.00" width="1" height="377.00" fill="#6b50c4"/><rect x="2039.30" y="1464.00" width="1" height="379.00" fill="#6b50c4"/><rect x="2057.63" y="1462.00" width="1" height="381.00" fill="#6b50c4"/><rect x="2074.87" y="1462.00" width="2" height="381.00" fill="#141416"/><rect x="2094.30" y="1392.00" width="1" height="451.00" fill="#6b50c4"/><rect x="2112.63" y="1397.90" width="1" height="445.10" fill="#6b50c4"/><rect x="2130.97" y="1408.00" width="1" height="435.00" fill="#6b50c4"/><rect x="2149.30" y="1408.00" width="1" height="435.00" fill="#6b50c4"/><rect x="2167.63" y="1390.20" width="1" height="452.80" fill="#6b50c4"/><rect x="2184.87" y="1390.20" width="2" height="452.80" fill="#141416"/><rect x="2204.30" y="1320.20" width="1" height="522.80" fill="#6b50c4"/><rect x="2222.63" y="1397.90" width="1" height="445.10" fill="#6b50c4"/><rect x="2240.97" y="1474.00" width="1" height="369.00" fill="#6b50c4"/><rect x="2259.30" y="1474.00" width="1" height="369.00" fill="#6b50c4"/><rect x="2276.53" y="1474.00" width="2" height="369.00" fill="#141416"/><rect x="2295.97" y="1474.00" width="1" height="369.00" fill="#6b50c4"/><rect x="2314.30" y="1474.00" width="1" height="369.00" fill="#6b50c4"/><rect x="2332.63" y="1472.00" width="1" height="371.00" fill="#6b50c4"/><rect x="2350.97" y="1472.00" width="1" height="371.00" fill="#6b50c4"/><rect x="2369.30" y="1472.00" width="1" height="371.00" fill="#6b50c4"/><rect x="2386.53" y="1468.00" width="2" height="375.00" fill="#141416"/><rect x="2405.97" y="1468.00" width="1" height="375.00" fill="#6b50c4"/><rect x="2424.30" y="1468.00" width="1" height="375.00" fill="#6b50c4"/><rect x="2442.63" y="1468.00" width="1" height="375.00" fill="#6b50c4"/><rect x="2460.97" y="1646.00" width="1" height="197.00" fill="#6b50c4"/><rect x="2845.97" y="1668.00" width="1" height="175.00" fill="#6b50c4"/><rect x="2864.30" y="1457.70" width="1" height="385.30" fill="#6b50c4"/><rect x="2882.63" y="1473.40" width="1" height="369.60" fill="#6b50c4"/><rect x="2900.97" y="1473.40" width="1" height="369.60" fill="#6b50c4"/><polyline points="289.0,1712.6 2452.3,1712.6 2470.6,1706.7" fill="none" stroke="#4f8fe0" stroke-width="3.5" transform="translate(0,-1)"/><polyline points="289.0,1712.6 2452.3,1712.6 2470.6,1706.7 2819.0,1459.7 2837.3,1712.9 2910.6,1712.9" fill="none" stroke="#5fcab0" stroke-width="3.6" stroke-linejoin="miter"/><rect x="2998.2" y="1524.3" width="31.5" height="23.2" fill="#7759d6"/><rect x="2998.2" y="1566" width="31.5" height="4" fill="#4aa0ec"/><rect x="2998.2" y="1596" width="31.5" height="4" fill="#6bd3b9"/></svg>
<svg width="3442" height="1912"><circle cx="3288.5" cy="1182.1000000000001" r="2.2" fill="#fff"/><circle cx="3288.5" cy="1188.7" r="2.2" fill="#fff"/><circle cx="3288.5" cy="1195.3" r="2.2" fill="#fff"/></svg>
<div class="t" style="font-size:22px;color:#bdbdbd;left:191.52px;top:1185.58px;transform-origin:0 18.62px;transform:scale(0.9795,1.0000);">2.5K</div>
<div class="t" style="font-size:22px;color:#bdbdbd;left:191.52px;top:1315.38px;transform-origin:0 18.62px;transform:scale(0.9795,1.0000);">2.0K</div>
<div class="t" style="font-size:22px;color:#bdbdbd;left:195.61px;top:1443.08px;transform-origin:0 18.62px;transform:scale(0.8886,1.0000);">1.5K</div>
<div class="t" style="font-size:22px;color:#bdbdbd;left:195.61px;top:1572.88px;transform-origin:0 18.62px;transform:scale(0.8886,1.0000);">1.0K</div>
<div class="t" style="font-size:22px;color:#bdbdbd;left:191.52px;top:1701.38px;transform-origin:0 18.62px;transform:scale(0.9795,1.0000);">0.5K</div>
<div class="t" style="font-size:22px;color:#bdbdbd;left:2942.61px;top:1185.38px;transform-origin:0 18.62px;transform:scale(0.8895,1.0000);">12K</div>
<div class="t" style="font-size:22px;color:#bdbdbd;left:2942.51px;top:1315.98px;transform-origin:0 18.62px;transform:scale(0.9885,1.0000);">9K</div>
<div class="t" style="font-size:22px;color:#bdbdbd;left:2942.52px;top:1443.38px;transform-origin:0 18.62px;transform:scale(0.9769,1.0000);">6K</div>
<div class="t" style="font-size:22px;color:#bdbdbd;left:2942.53px;top:1573.88px;transform-origin:0 18.62px;transform:scale(0.9654,1.0000);">3K</div>
<div class="t" style="font-size:22px;color:#bdbdbd;left:2942.37px;top:1701.88px;transform-origin:0 18.62px;transform:scale(1.1273,1.0000);">0</div>
<div class="t" style="font-size:21px;color:#bdbdbd;left:332.51px;top:1860.22px;transform-origin:0 17.78px;transform:scale(1.0933,1.0000);">2:00 AM</div>
<div class="t" style="font-size:21px;color:#bdbdbd;left:552.51px;top:1860.22px;transform-origin:0 17.78px;transform:scale(1.0933,1.0000);">3:00 AM</div>
<div class="t" style="font-size:21px;color:#bdbdbd;left:773.60px;top:1860.22px;transform-origin:0 17.78px;transform:scale(1.0933,1.0000);">4:00 AM</div>
<div class="t" style="font-size:21px;color:#bdbdbd;left:992.51px;top:1860.22px;transform-origin:0 17.78px;transform:scale(1.0933,1.0000);">5:00 AM</div>
<div class="t" style="font-size:21px;color:#bdbdbd;left:1212.51px;top:1860.22px;transform-origin:0 17.78px;transform:scale(1.0933,1.0000);">6:00 AM</div>
<div class="t" style="font-size:21px;color:#bdbdbd;left:1432.51px;top:1860.22px;transform-origin:0 17.78px;transform:scale(1.0933,1.0000);">7:00 AM</div>
<div class="t" style="font-size:21px;color:#bdbdbd;left:1652.51px;top:1860.22px;transform-origin:0 17.78px;transform:scale(1.0933,1.0000);">8:00 AM</div>
<div class="t" style="font-size:21px;color:#bdbdbd;left:1872.51px;top:1860.22px;transform-origin:0 17.78px;transform:scale(1.0933,1.0000);">9:00 AM</div>
<div class="t" style="font-size:21px;color:#bdbdbd;left:2092.51px;top:1860.22px;transform-origin:0 17.78px;transform:scale(1.0933,1.0000);">10:00 AM</div>
<div class="t" style="font-size:21px;color:#bdbdbd;left:2312.51px;top:1860.22px;transform-origin:0 17.78px;transform:scale(1.0933,1.0000);">11:00 AM</div>
<div class="t" style="font-size:21px;color:#bdbdbd;left:2532.51px;top:1860.22px;transform-origin:0 17.78px;transform:scale(1.0933,1.0000);">12:00 PM</div>
<div class="t" style="font-size:21px;color:#bdbdbd;left:2752.51px;top:1860.22px;transform-origin:0 17.78px;transform:scale(1.0933,1.0000);">1:00 PM</div>
<div class="t" style="font-size:21px;color:#bdbdbd;left:332.62px;top:1888.22px;transform-origin:0 17.78px;transform:scale(0.9768,1.0000);">Sat Jan 10</div>
<div class="t" style="font-size:22px;color:#bdbdbd;left:3039.20px;top:1527.28px;transform-origin:0 18.62px;transform:scale(1.1005,1.0000);">latest_eventcount_5m</div>
<div class="t" style="font-size:22px;color:#bdbdbd;left:3039.20px;top:1557.78px;transform-origin:0 18.62px;transform:scale(1.1005,1.0000);">avg_latency_5m</div>
<div class="t" style="font-size:22px;color:#bdbdbd;left:3039.20px;top:1587.38px;transform-origin:0 18.62px;transform:scale(1.1005,1.0000);">lag_event_sec</div>
<div class="t" style="font-size:22px;color:#bdbdbd;left:181.00px;top:1616.58px;transform-origin:0 18.62px;transform:rotate(-90deg) translateX(-1.10px) scale(1.0972,1.0000);">latest_eventcount_5m</div>
</body></html>
